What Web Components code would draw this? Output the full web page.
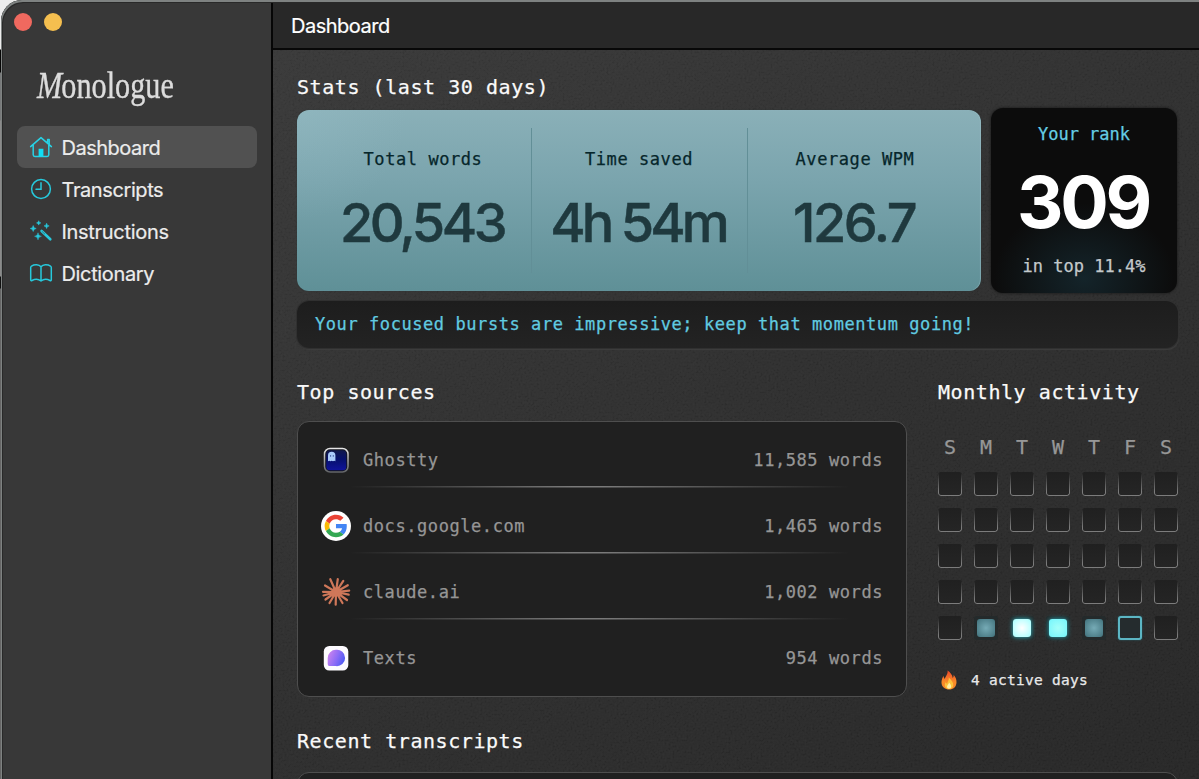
<!DOCTYPE html>
<html lang="en">
<head>
<meta charset="utf-8">
<title>Monologue</title>
<style>
html,body{margin:0;height:100%;overflow:hidden;background:#0c0c0c}
body{font-family:Inter,sans-serif;color:#fff;
 background:linear-gradient(#ededed 0 49px,#050505 50px 72px,#77797a 73px 120px,#8b8b8b 121px 276px,#101010 277px 288px,#666 289px 100%)}
</style>
</head>
<body>
<app-window>
  <app-sidebar slot="side">
    <nav-item active label="Dashboard" ls="-.5"><svg width="24" height="24" viewBox="0 0 24 24" fill="none" stroke="#27d3e6" stroke-width="1.5" stroke-linejoin="round" stroke-linecap="round"><path d="M1.6 11.6 12 2.6l10.4 9M4.2 10v9.8q0 1.7 1.7 1.7h12.2q1.7 0 1.700-1.700V10M18.600 7.600V4.600h1.600V9"/><path d="M9.600 21.300v-7.600h4.800v7.600z" fill="#10dff5" stroke="none"/></svg></nav-item>
    <nav-item label="Transcripts" ls="-.4"><svg width="24" height="24" viewBox="0 0 24 24" fill="none" stroke="#27c9dc" stroke-width="1.5" stroke-linecap="round"><circle cx="12" cy="12" r="9.400"/><path d="M12 5.800V12.300H7"/></svg></nav-item>
    <nav-item label="Instructions" ls="-.3"><svg width="24" height="24" viewBox="0 0 24 24" fill="#27c9dc"><path d="M12.600 12l8.700 8.300" stroke="#27c9dc" stroke-width="2.600" stroke-linecap="round"/><path d="M12.800 12.200l3.200 3" stroke="#2f6f78" stroke-width=".8"/><path d="M4.200 6.500q.3 2.700 3 3-2.700.300-3 3-.300-2.700-3-3 2.700-.300 3-3zM9.700 1.700q.2 2 2.200 2.200-2 .2-2.200 2.200-.2-2-2.200-2.200 2-.2 2.200-2.200zM17.600 4.200q.2 2.500 2.600 2.700-2.400.2-2.600 2.700-.2-2.500-2.600-2.700 2.400-.2 2.600-2.700zM9 13.800q.3 3.200 3.400 3.500-3.100.3-3.400 3.500-.3-3.200-3.400-3.500 3.100-.3 3.400-3.500z" stroke="#27c9dc" stroke-width=".5"/></svg></nav-item>
    <nav-item label="Dictionary" ls="-.35"><svg width="24" height="24" viewBox="0 0 24 24" fill="none" stroke="#27c9dc" stroke-width="1.5" stroke-linejoin="round"><path d="M12 5.700C10 3.300 5.500 3.100 2.500 5.100 1.900 5.500 1.700 5.800 1.700 6.500v12.200c0 .9.600 1.200 1.300.8 2.800-1.600 6.600-1.500 9 .5 2.400-2 6.200-2.100 9-.5.7.4 1.300.1 1.300-.8V6.500c0-.7-.2-1-.8-1.400-3-2-7.500-1.800-9.500.6zM12 5.700V20"/></svg></nav-item>
  </app-sidebar>
  <page-header slot="main">Dashboard</page-header>
  <dash-board slot="main"></dash-board>
</app-window>

<script>
const MONO = `font-family:"DejaVu Sans Mono",monospace;white-space:pre;-webkit-text-stroke:.25px currentColor;`;
const define = (name, html) => customElements.define(name, class extends HTMLElement {
  constructor() {
    super();
    this.attachShadow({mode:'open'}).innerHTML = html(this);
  }
});

define('app-window', () => `<style>
:host{display:grid;grid-template-columns:270px 1fr;width:1198px;height:776px;margin-left:1px;padding-top:3px;
 border-radius:21px 0 0 0;overflow:hidden;background:#383838;box-shadow:inset 1px 2px 0 #7e8281,inset 2px 3px 0 #292929}
.side{display:flex}
.main{display:flex;flex-direction:column;min-width:0;border-left:2px solid #060606;height:776px;overflow:hidden}
</style><div class="side"><slot name="side"></slot></div><div class="main"><slot name="main"></slot></div>`);

define('app-sidebar', () => `<style>
:host{display:flex;flex-direction:column;width:100%;padding:10px 14.5px 0 15.5px;box-sizing:border-box}
.lights{display:flex;gap:12px;margin-left:-3px}
.lights i{width:18px;height:18px;border-radius:50%;background:#f0695f}
.lights i+i{background:#f5bf4f}
.logo{font:38px/50px "Liberation Serif",serif;color:#dcdcdc;height:50px;margin:29px 0 16px 20.500px;transform:scaleX(.795);transform-origin:0 0;white-space:nowrap;-webkit-text-stroke:.4px #dcdcdc}
.logo em{letter-spacing:-1px}
nav{display:flex;flex-direction:column}
</style><div class="lights"><i></i><i></i></div><div class="logo"><em>M</em>onologue</div><nav><slot></slot></nav>`);

define('nav-item', el => `<style>
:host{display:flex;align-items:center;gap:9px;height:42px;padding-left:12px;border-radius:8px;font-size:20px;color:#ececec;letter-spacing:${el.getAttribute('ls')}px;-webkit-text-stroke:.2px currentColor}
:host([active]){background:#515151}
span{margin-top:2px}
</style><slot></slot><span>${el.getAttribute('label')}</span>`);

define('page-header', () => `<style>
:host{display:block;flex:none;height:44px;padding:1px 0 0 18px;background:#282828;border-bottom:2px solid #080808;font-size:20px;line-height:45px;letter-spacing:-.5px;-webkit-text-stroke:.2px currentColor}
</style><slot></slot>`);

define('section-title', () => `<style>
:host{display:block;${MONO}font-size:20px;line-height:30px;letter-spacing:.56px;color:#fafafa}
</style><slot></slot>`);

define('stat-cell', el => `<style>
:host{display:flex;flex-direction:column;align-items:center;height:145px;box-sizing:border-box}
:host(:not(:first-child)){box-shadow:inset 1px 0 0 #628f97}
.l{${MONO}font-size:17px;letter-spacing:.57px;line-height:24px;margin-top:19px;color:#06262b}
.v{font-size:54px;font-weight:500;line-height:60px;margin-top:22px;margin-right:2px;letter-spacing:${el.getAttribute('ls')}px;color:#1f393e;white-space:nowrap;-webkit-text-stroke:.5px currentColor}
</style><div class="l">${el.getAttribute('label')}</div><div class="v">${el.getAttribute('value')}</div>`);

define('rank-card', () => `<style>
:host{display:flex;flex-direction:column;align-items:center;width:186px;height:185px;border-radius:12px;
 background:radial-gradient(ellipse 90px 75px at 50% 92%,#14242a,#0c0c0c00),#0c0c0c;box-shadow:0 0 3px #151515}
.a,.c{${MONO}font-size:17px;line-height:24px}
.a{color:#65cde4;margin-top:14px}.c{color:#c3c9cb;margin-top:10px}
.b{font-size:72px;font-weight:700;line-height:84px;margin-top:14px;margin-right:2px;letter-spacing:-3.300px}
</style><div class="a">Your rank</div><div class="b">309</div><div class="c">in top 11.4%</div>`);

define('source-row', el => `<style>
:host{display:flex;align-items:center;height:66px;${MONO}font-size:17px;letter-spacing:.57px;color:#969696;
 background:linear-gradient(90deg,#0000 5%,#7a7a7a 45% 50%,#0000 94%) 0 58.500px/100% 1.500px no-repeat}
:host(:last-child){background:none}
.ic{display:flex;width:30px;height:30px;margin:-1px 12px 0 0}
span{margin-top:-1px}
.w{margin-left:auto}
</style><div class="ic"><slot></slot></div><span>${el.getAttribute('name')}</span><span class="w">${el.getAttribute('words')}</span>`);

define('month-activity', () => {
  const lit = {29:'mid', 30:'hot', 31:'bright', 32:'mid', 33:'today'};
  return `<style>
:host{display:block;width:240px}
.g{display:grid;grid-template-columns:repeat(7,24px);gap:12px}
.d{${MONO}font-size:20px;line-height:24px;height:28px;text-align:center;color:#979797;margin-bottom:-3px}
.c{height:24px;box-sizing:border-box;border-radius:3px;position:relative;background:linear-gradient(#202020,#252525)}
.e::before{content:"";position:absolute;inset:0;border:1.500px solid #7c7c7c;border-top:0;border-radius:3px;-webkit-mask:linear-gradient(#0000,#000 80%)}
.mid,.hot,.bright{background:#242a2b}
.mid::before,.hot::before,.bright::before{content:"";position:absolute;inset:3px;border-radius:3px}
.mid::before{background:radial-gradient(#76abb6,#41717b)}
.hot::before{background:radial-gradient(#fff,#a5ffff);box-shadow:0 0 5px #38bdc9}
.bright::before{background:radial-gradient(#a5fff9,#73f5fc);box-shadow:0 0 5px #2aa8b6}
.today{border:2px solid #5cb6c4;background:#252c2e;box-shadow:0 0 2px #276974}
.f{display:flex;align-items:center;gap:11px;margin-top:28px;${MONO}font-size:14.500px;letter-spacing:.27px;line-height:24px;color:#e9e9e9}
</style>
<div class="g">${[...'SMTWTFS'].map(d=>`<div class="d">${d}</div>`).join('')}
${Array.from({length:35},(_,i)=>`<div class="c ${lit[i-0]||'e'}"></div>`).join('')}</div>
<div class="f"><svg width="22" height="22" viewBox="0 0 22 22"><defs><linearGradient id="f" x2="0" y2="1"><stop stop-color="#e8452a"/><stop offset=".6" stop-color="#fb8c28"/><stop offset="1" stop-color="#f5822a"/></linearGradient></defs><path d="M9.500 1.500c3 2 5 4.500 5.200 7.500.8-.8 1.100-1.900.9-3.200 2 2 3 4.800 2.900 7.700-.2 4.500-3.300 7-7.300 7S3.700 18 3.500 13.700C3.400 11 4.500 8.600 5.600 6.800c.1 1.500.5 2.500 1.200 3.200C7.500 7 10.200 5 9.500 1.500z" fill="url(#f)"/><path d="M10.700 8.500c2.400 2.400 4.900 5 4.600 8-.2 2.300-1.800 3.500-4.100 3.500s-4.300-1.200-4.400-3.700c0-1.500.4-2.300 1-3.100.3.900.7 1.400 1.400 1.600.2-2.200 2.200-3.600 1.500-6.300z" fill="#fdc23b"/><path d="M11 13.500c1.500 1.500 2.400 3 2.100 4.500-.2 1.200-1 1.700-2.100 1.700s-2-.7-2-1.900c0-1.500 1.900-2.200 2-4.300z" fill="#fff0a8"/></svg><span>4 active days</span></div>`;
});

define('dash-board', () => `<style>
:host{display:block;flex:1;position:relative;overflow:hidden;background:linear-gradient(150deg,#393939 0,#2f2f2f 48%,#272727 100%)}
.grain{position:absolute;inset:0;opacity:.03}
.body{position:relative;padding:22px 21px 0 24px;width:881px}
.stats{display:flex;align-items:center;justify-content:space-between;height:185px;margin-top:6px;width:880px}
.blue{display:grid;grid-template-columns:repeat(3,216px);padding:18px;border-radius:12px;
 background:radial-gradient(circle at 0 0,#99c1ca50,#0000 110px),linear-gradient(#8ab0b8,#7aa4ad 40%,#5f9097);box-shadow:0 0 1px #263436,inset -1px 0 1px #a2c4ca70}
.msg{${MONO}font-size:17px;letter-spacing:.57px;color:#61cbe0;height:47px;line-height:47px;padding-left:18px;border-radius:12px;margin-top:8px;background:linear-gradient(#1d1d1d,#232323);box-shadow:0 0 0 1px #303030,1px 2px 1px #3d3d3d}
.cols{display:flex;justify-content:space-between;margin-top:29px}
.panel{margin-top:14px;box-sizing:border-box;width:610px;height:276px;border:1.500px solid #4e4e4e;border-radius:12px;background:#202020;padding:5px 23px 0 23px}
month-activity{margin-top:28px}
.recent{margin-top:29px}
.next{height:50px;margin-top:16px;border:1.500px solid #4e4e4e;border-radius:12px;background:#202020}
</style>
<svg class="grain" width="100%" height="100%"><filter id="n"><feTurbulence type="fractalNoise" baseFrequency=".5" numOctaves="2"/><feColorMatrix values=".33 .33 .33 0 0 .33 .33 .33 0 0 .33 .33 .33 0 0 0 0 0 0 1"/><feComponentTransfer><feFuncR type="linear" slope="2.500" intercept="-.95"/><feFuncG type="linear" slope="2.500" intercept="-.95"/><feFuncB type="linear" slope="2.500" intercept="-.95"/></feComponentTransfer></filter><rect width="100%" height="100%" filter="url(#n)"/></svg>
<div class="body">
<section-title>Stats (last 30 days)</section-title>
<div class="stats"><div class="blue">
<stat-cell label="Total words" value="20,543" ls="-3.500"></stat-cell><stat-cell label="Time saved" value="4h 54m" ls="-3.900"></stat-cell><stat-cell label="Average WPM" value="126.7" ls="-2.400"></stat-cell></div>
<rank-card></rank-card></div>
<div class="msg">Your focused bursts are impressive; keep that momentum going!</div>
<div class="cols"><div><section-title>Top sources</section-title><div class="panel">
<source-row name="Ghostty" words="11,585 words"><svg width="30" height="30" viewBox="0 0 30 30"><defs><linearGradient id="gg" x2="0" y2="1"><stop stop-color="#10184c"/><stop offset=".45" stop-color="#06106c"/><stop offset="1" stop-color="#10139c"/></linearGradient><linearGradient id="gb" x2="0" y2="1"><stop stop-color="#e5e5e5"/><stop offset="1" stop-color="#626468"/></linearGradient></defs><rect x="3.500" y="3.500" width="23.500" height="23.500" rx="5.500" fill="#11131c" stroke="url(#gb)" stroke-width="1.500"/><rect x="5.300" y="5.300" width="20" height="20" rx="3.500" fill="url(#gg)"/><path d="M7 16.300V10.500a3.700 3.700 0 0 1 7.400 0v5.800l-1.200-.5-1.200.5-1.300-.5-1.300.5-1.200-.5z" fill="#a9cbfa"/><path d="M9.600 10v1.800M12.300 10v1.800" stroke="#4c67ab"/></svg></source-row>
<source-row name="docs.google.com" words="1,465 words"><svg width="30" height="30" viewBox="0 0 30 30"><circle cx="15" cy="15" r="15" fill="#fff"/><g transform="translate(3.700 3.700) scale(.47)"><path fill="#EA4335" d="M24 9.500c3.540 0 6.710 1.220 9.210 3.600l6.850-6.850C35.900 2.380 30.470 0 24 0 14.620 0 6.510 5.380 2.560 13.220l7.980 6.190C12.430 13.720 17.740 9.500 24 9.500z"/><path fill="#4285F4" d="M46.980 24.550c0-1.570-.15-3.090-.38-4.550H24v9.020h12.940c-.58 2.960-2.260 5.480-4.780 7.180l7.730 6c4.510-4.180 7.090-10.360 7.090-17.650z"/><path fill="#FBBC05" d="M10.530 28.590a14.500 14.500 0 0 1 0-9.180l-7.980-6.190a24 24 0 0 0 0 21.560z"/><path fill="#34A853" d="M24 48c6.480 0 11.930-2.130 15.890-5.810l-7.730-6c-2.150 1.450-4.920 2.300-8.160 2.300-6.260 0-11.570-4.220-13.470-9.910l-7.980 6.190C6.510 42.620 14.620 48 24 48z"/></g></svg></source-row>
<source-row name="claude.ai" words="1,002 words"><svg width="30" height="30" viewBox="0 0 30 30" stroke="#cf7759" stroke-width="2.200" stroke-linecap="round"><path d="M15 15 9.300 2.200M15 15 16.800 2M15 15 22.300 3.800M15 15 26.800 8.200M15 15 28.200 13.700M15 15 27.700 17.700M15 15 26 23M15 15 21.500 26M15 15 14.700 27.700M15 15 8.500 26M15 15 4.500 22.500M15 15 2.500 18.500M15 15 2 14.800M15 15 4 8.500"/><circle cx="15" cy="15" r="3.500" fill="#cf7759"/></svg></source-row>
<source-row name="Texts" words="954 words"><svg width="30" height="30" viewBox="0 0 30 30"><defs><linearGradient id="t" x1="0" y1=".4" x2="1" y2=".8"><stop stop-color="#c681ef"/><stop offset=".5" stop-color="#8b6bf7"/><stop offset="1" stop-color="#4558f3"/></linearGradient></defs><rect x="2.800" y="3" width="24.500" height="24.500" rx="5.500" fill="#fdfbff"/><path d="M15 6.800a8.200 8.200 0 1 1 0 16.300H8.400Q6.600 23 6.700 21V15A8.200 8.200 0 0 1 15 6.800z" fill="url(#t)"/></svg></source-row>
</div></div>
<div><section-title>Monthly activity</section-title><month-activity></month-activity></div></div>
<section-title class="recent">Recent transcripts</section-title><div class="next"></div>
</div>`);
</script>
</body>
</html>
